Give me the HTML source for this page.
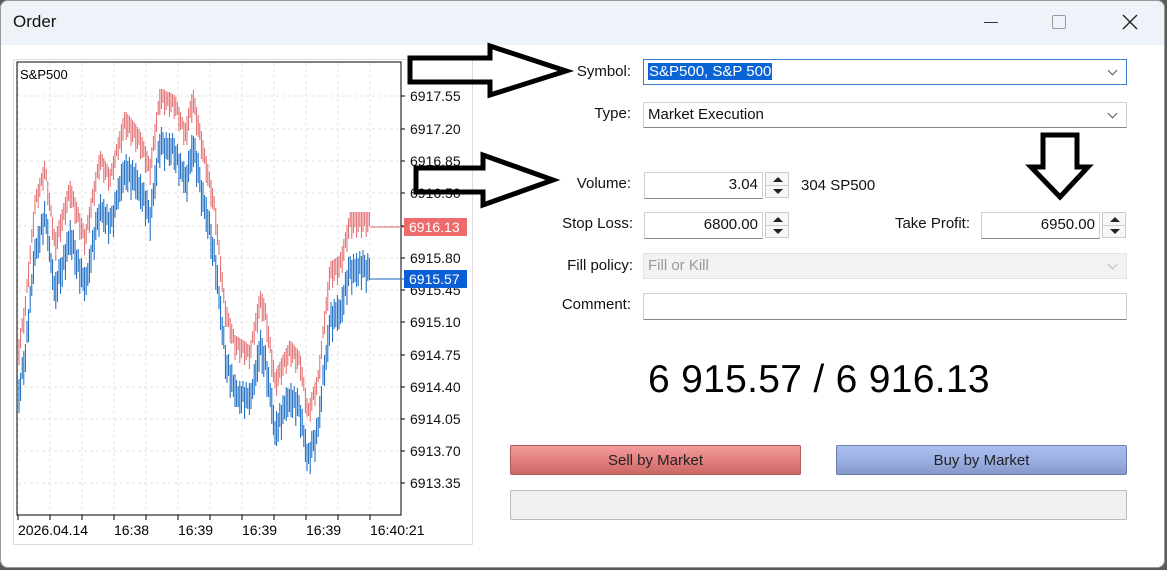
<!DOCTYPE html>
<html><head><meta charset="utf-8"><style>
*{margin:0;padding:0;box-sizing:border-box}
body{width:1167px;height:570px;background:#5a5a5a;font-family:"Liberation Sans",sans-serif;position:relative;overflow:hidden}
.win{position:absolute;left:0;top:0;width:1165px;height:568px;background:#fff;border-radius:8px;overflow:hidden;box-shadow:inset 0 0 0 1px #999}
.title{position:absolute;left:1px;top:1px;width:1163px;height:44px;background:#eef3f9;border-radius:8px 8px 0 0}
.t{position:absolute;font-size:15px;color:#111;white-space:nowrap}
.lab{position:absolute;font-size:15px;color:#111;text-align:right;width:120px;white-space:nowrap}
.box{position:absolute;border:1px solid #cfcfcf;border-bottom:1px solid #888;background:#fff;font-size:15px;color:#111;line-height:24px;padding:0 4px}
.spin{position:absolute;width:24px;height:26px;border:1px solid #ccc;background:#f7f7f7}
.spin:before{content:"";position:absolute;left:7px;top:4px;border-left:5px solid transparent;border-right:5px solid transparent;border-bottom:5px solid #222}
.spin:after{content:"";position:absolute;left:7px;top:16px;border-left:5px solid transparent;border-right:5px solid transparent;border-top:5px solid #222}
.spin i{position:absolute;left:0;top:12px;width:22px;height:1px;background:#ccc}
.dd{position:absolute;right:10px;top:7px;width:7px;height:7px;border-right:1.3px solid #555;border-bottom:1.3px solid #555;transform:rotate(45deg)}
.btn{position:absolute;height:30px;font-size:15px;text-align:center;line-height:30px;color:#222;border-radius:2px}
</style></head><body>
<div class="win">
<div class="title"></div>
<div class="t" style="left:13px;top:12px;font-size:17px">Order</div>
<div style="position:absolute;left:984px;top:22px;width:14px;height:1px;background:#333"></div>
<div style="position:absolute;left:1052px;top:15px;width:14px;height:14px;border:1px solid #999;border-radius:2px"></div>
<svg style="position:absolute;left:1122px;top:14px" width="16" height="16"><path d="M1 1L15 15M15 1L1 15" stroke="#222" stroke-width="1.4"/></svg>

<div style="position:absolute;left:13px;top:59px;width:460px;height:486px;border:1px solid #ddd"></div>
<svg id="ch" style="position:absolute;left:0;top:0" width="480" height="560"></svg>

<svg style="position:absolute;left:0;top:0" width="1163" height="568">
<path d="M410 58H490V46L566 71L490 95V82H410Z" fill="none" stroke="#000" stroke-width="5"/>
<path d="M416 168H483V155L553 180L483 205V192H416Z" fill="none" stroke="#000" stroke-width="5"/>
<path d="M1043 135H1077V167H1088L1060 197L1031 167H1043Z" fill="none" stroke="#000" stroke-width="5"/>
</svg>

<div class="lab" style="left:511px;top:63px">Symbol:</div>
<div class="box" style="left:643px;top:59px;width:484px;height:26px;border:1px solid #3a7bc8"><span style="background:#0a64d6;color:#fff;padding:0 1px">S&amp;P500, S&amp;P 500</span><div class="dd"></div></div>
<div class="lab" style="left:511px;top:105px">Type:</div>
<div class="box" style="left:643px;top:102px;width:484px;height:26px">Market Execution<div class="dd"></div></div>

<div class="lab" style="left:511px;top:175px">Volume:</div>
<div class="box" style="left:644px;top:172px;width:119px;height:27px;text-align:right">3.04</div>
<div class="spin" style="left:765px;top:172px"><i></i></div>
<div class="t" style="left:801px;top:177px">304 SP500</div>

<div class="lab" style="left:513px;top:215px">Stop Loss:</div>
<div class="box" style="left:644px;top:212px;width:119px;height:27px;text-align:right">6800.00</div>
<div class="spin" style="left:765px;top:212px"><i></i></div>
<div class="lab" style="left:850px;top:215px">Take Profit:</div>
<div class="box" style="left:981px;top:212px;width:119px;height:27px;text-align:right">6950.00</div>
<div class="spin" style="left:1102px;top:212px"><i></i></div>

<div class="lab" style="left:513px;top:257px">Fill policy:</div>
<div class="box" style="left:643px;top:253px;width:484px;height:26px;background:#f2f2f2;border-color:#e2e2e2;color:#999">Fill or Kill<div class="dd" style="border-color:#bbb"></div></div>
<div class="lab" style="left:511px;top:296px">Comment:</div>
<div class="box" style="left:643px;top:293px;width:484px;height:27px"></div>

<div class="t" style="left:648px;top:358px;font-size:39px;color:#000;letter-spacing:0.3px">6 915.57 / 6 916.13</div>

<div class="btn" style="left:510px;top:445px;width:291px;background:linear-gradient(#f29a9a,#e07a7a 60%,#c96868);border:1px solid #b05a5a">Sell by Market</div>
<div class="btn" style="left:836px;top:445px;width:291px;background:linear-gradient(#aabfee,#98acdf 60%,#8598c8);border:1px solid #6a7fb0">Buy by Market</div>
<div style="position:absolute;left:510px;top:490px;width:617px;height:30px;background:#f0f0f0;border:1px solid #bbb;border-radius:2px"></div>
</div>
<script>
const s=document.getElementById('ch');let h='';
for(let x=18;x<=400;x+=32)h+=`<line x1="${x}" y1="63" x2="${x}" y2="515" stroke="#e3e3e3" stroke-dasharray="3,3"/>`;
const ys=[96,129,161,193,226,258,290,322,355,387,419,451,483];
const pr=['6917.55','6917.20','6916.85','6916.50','6916.15','6915.80','6915.45','6915.10','6914.75','6914.40','6914.05','6913.70','6913.35'];
ys.forEach((y,i)=>{h+=`<line x1="18" y1="${y}" x2="400" y2="${y}" stroke="#e3e3e3" stroke-dasharray="3,3"/><line x1="401" y1="${y}" x2="405" y2="${y}" stroke="#000"/><text x="410" y="${y+5}" font-size="14" font-family="Liberation Sans" fill="#111">${pr[i]}</text>`});
const k=[[18,345],[25,300],[35,195],[45,160],[55,235],[70,180],[85,230],[100,150],[110,170],[125,110],[140,130],[150,160],[160,88],[175,95],[185,125],[193,88],[205,150],[215,200],[225,300],[235,335],[250,345],[260,290],[265,300],[275,372],[290,340],[300,352],[308,405],[318,372],[330,262],[340,255],[350,212],[370,212]];
function f(x){for(let i=0;i<k.length-1;i++){if(x>=k[i][0]&&x<=k[i+1][0]){const t=(x-k[i][0])/(k[i+1][0]-k[i][0]);return k[i][1]+t*(k[i+1][1]-k[i][1]);}}return 212;}
let r='',b='';
for(let x=19;x<=370;x+=1.6){const y=f(x);const a=12+((x*7)%17);r+=`M${x.toFixed(1)} ${y.toFixed(0)}v${a.toFixed(0)}`;const yb=y+38+((x*3)%11);b+=`M${x.toFixed(1)} ${(yb).toFixed(0)}v${(a+8).toFixed(0)}`;}
h+=`<path d="${r}" stroke="#e0696b" stroke-width="1"/><path d="${b}" stroke="#1466c0" stroke-width="1"/>`;
h+=`<rect x="17" y="62" width="384" height="453" fill="none" stroke="#000"/>`;
h+=`<text x="20" y="79" font-size="13" font-family="Liberation Sans">S&amp;P500</text>`;
h+=`<line x1="370" y1="227" x2="404" y2="227" stroke="#e0696b"/><rect x="404" y="218" width="63" height="18" fill="#ef6a6a"/><text x="409" y="232" font-size="14" font-family="Liberation Sans" fill="#fff">6916.13</text>`;
h+=`<line x1="370" y1="279" x2="404" y2="279" stroke="#1466c0"/><rect x="404" y="270" width="63" height="18" fill="#0b5fd6"/><text x="409" y="284" font-size="14" font-family="Liberation Sans" fill="#fff">6915.57</text>`;
const tl=['2026.04.14','16:38','16:39','16:39','16:39','16:40:21'];
for(let x=18;x<=370;x+=32)h+=`<line x1="${x}" y1="515" x2="${x}" y2="520" stroke="#000"/>`;
[[18,0],[114,1],[178,2],[242,3],[306,4],[370,5]].forEach(([x,i])=>h+=`<text x="${x}" y="535" font-size="14" font-family="Liberation Sans">${tl[i]}</text>`);
s.innerHTML=h;
</script>
</body></html>
